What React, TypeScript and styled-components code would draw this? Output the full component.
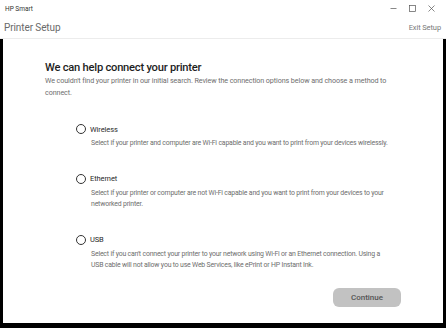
import React from "react";
import styled, { createGlobalStyle } from "styled-components";

const GlobalStyle = createGlobalStyle`
  html, body {
    margin: 0;
    padding: 0;
    background: #ffffff;
  }
  body {
    font-family: Roboto, "Noto Sans", "Liberation Sans", sans-serif;
    -webkit-font-smoothing: antialiased;
  }
`;

const Window = styled.div`
  width: 446px;
  height: 328px;
  display: flex;
  flex-direction: column;
  background: #ffffff;
  overflow: hidden;
`;

const TitleBar = styled.div`
  height: 17px;
  display: flex;
  align-items: center;
  justify-content: space-between;
  padding: 0 5px;
  font-size: 6.5px;
  color: #333;
`;

const WindowControls = styled.div`
  display: flex;
  height: 100%;
`;

const ControlButton = styled.div`
  width: 19px;
  height: 17px;
  display: flex;
  align-items: center;
  justify-content: center;
`;

const Header = styled.div`
  height: 21px;
  display: flex;
  align-items: center;
  justify-content: space-between;
  padding: 0 5px 0 4px;
  border-bottom: 1px solid #ececec;
`;

const HeaderTitle = styled.span`
  font-size: 10px;
  color: #6a6a6a;
  letter-spacing: -0.1px;
`;

const ExitLink = styled.span`
  font-size: 7.5px;
  color: #7a7a7a;
  letter-spacing: -0.1px;
`;

const Body = styled.div`
  flex: 1;
  border-left: 3px solid #000;
  border-right: 3px solid #000;
  border-bottom: 5px solid #000;
  padding: 21px 0 0 42px;
  display: flex;
  flex-direction: column;
`;

const Heading = styled.h1`
  margin: 0;
  font-size: 11.2px;
  font-weight: 500;
  color: #1e1e1e;
  letter-spacing: -0.25px;
  line-height: 15px;
`;

const Intro = styled.p`
  margin: 0;
  font-size: 7.2px;
  line-height: 12px;
  color: #6e6e6e;
  letter-spacing: -0.1px;
`;

const Options = styled.div`
  display: flex;
  flex-direction: column;
  gap: 23px;
  padding: 24px 0 0 31px;
`;

const Option = styled.label`
  display: flex;
  flex-direction: column;
`;

const OptionHead = styled.div`
  display: flex;
  align-items: center;
  gap: 4px;
  height: 12px;
`;

const Radio = styled.span`
  width: 8px;
  height: 8px;
  border: 1.5px solid #333;
  border-radius: 50%;
  flex-shrink: 0;
`;

const OptionName = styled.span`
  font-size: 7.5px;
  color: #2a2a2a;
  letter-spacing: -0.1px;
`;

const OptionText = styled.p`
  margin: 3px 0 0 15px;
  font-size: 6.9px;
  line-height: 11.5px;
  color: #6e6e6e;
  letter-spacing: -0.18px;
`;

const Footer = styled.div`
  margin-top: auto;
  display: flex;
  justify-content: flex-end;
  padding: 0 42px 16px 0;
`;

const ContinueButton = styled.button`
  width: 68px;
  height: 19px;
  border: none;
  border-radius: 6px;
  background: #c2c2c2;
  color: #555;
  font-family: inherit;
  font-size: 8px;
  font-weight: 500;
  padding: 0;
`;

const OPTIONS = [
  {
    id: "wireless",
    label: "Wireless",
    lines: [
      "Select if your printer and computer are Wi-Fi capable and you want to print from your devices wirelessly.",
    ],
  },
  {
    id: "ethernet",
    label: "Ethernet",
    lines: [
      "Select if your printer or computer are not Wi-Fi capable and you want to print from your devices to your",
      "networked printer.",
    ],
  },
  {
    id: "usb",
    label: "USB",
    lines: [
      "Select if you can't connect your printer to your network using Wi-Fi or an Ethernet connection. Using a",
      "USB cable will not allow you to use Web Services, like ePrint or HP Instant Ink.",
    ],
  },
];

export default function App() {
  return (
    <>
      <GlobalStyle />
      <Window>
        <TitleBar>
          <span>HP Smart</span>
          <WindowControls>
            <ControlButton>
              <svg width="7" height="7" viewBox="0 0 7 7">
                <path d="M0.5 3.5H6.5" stroke="#555" strokeWidth="0.7" />
              </svg>
            </ControlButton>
            <ControlButton>
              <svg width="7" height="7" viewBox="0 0 7 7">
                <rect x="0.5" y="0.5" width="6" height="6" fill="none" stroke="#555" strokeWidth="0.7" />
              </svg>
            </ControlButton>
            <ControlButton>
              <svg width="7" height="7" viewBox="0 0 7 7">
                <path d="M0.5 0.5L6.5 6.5M6.5 0.5L0.5 6.5" stroke="#555" strokeWidth="0.7" />
              </svg>
            </ControlButton>
          </WindowControls>
        </TitleBar>
        <Header>
          <HeaderTitle>Printer Setup</HeaderTitle>
          <ExitLink>Exit Setup</ExitLink>
        </Header>
        <Body>
          <Heading>We can help connect your printer</Heading>
          <Intro>
            We couldn't find your printer in our initial search. Review the connection options below and choose a method to
            <br />
            connect.
          </Intro>
          <Options>
            {OPTIONS.map((opt) => (
              <Option key={opt.id}>
                <OptionHead>
                  <Radio />
                  <OptionName>{opt.label}</OptionName>
                </OptionHead>
                <OptionText>
                  {opt.lines.map((line, i) => (
                    <React.Fragment key={i}>
                      {i > 0 && <br />}
                      {line}
                    </React.Fragment>
                  ))}
                </OptionText>
              </Option>
            ))}
          </Options>
          <Footer>
            <ContinueButton>Continue</ContinueButton>
          </Footer>
        </Body>
      </Window>
    </>
  );
}
